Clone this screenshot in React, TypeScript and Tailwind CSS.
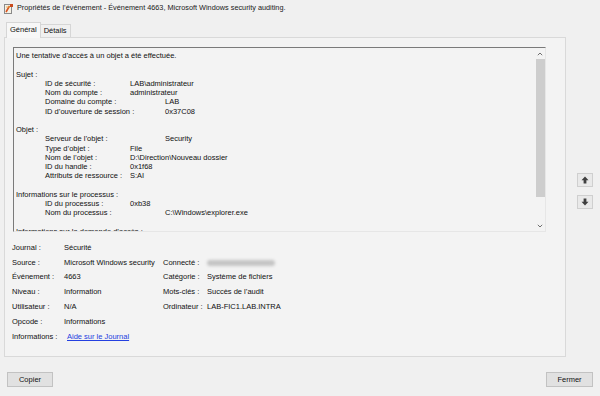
import React from "react";

const font = { fontFamily: '"Liberation Sans", Arial, sans-serif' };

type Line = { text?: string; label?: string; value?: string; far?: boolean };

const message: Line[] = [
  { text: "Une tentative d’accès à un objet a été effectuée." },
  {},
  { text: "Sujet :" },
  { label: "ID de sécurité :", value: "LAB\\administrateur" },
  { label: "Nom du compte :", value: "administrateur" },
  { label: "Domaine du compte :", value: "LAB", far: true },
  { label: "ID d’ouverture de session :", value: "0x37C08", far: true },
  {},
  { text: "Objet :" },
  { label: "Serveur de l’objet :", value: "Security", far: true },
  { label: "Type d’objet :", value: "File" },
  { label: "Nom de l’objet :", value: "D:\\Direction\\Nouveau dossier" },
  { label: "ID du handle :", value: "0x1f68" },
  { label: "Attributs de ressource :", value: "S:AI" },
  {},
  { text: "Informations sur le processus :" },
  { label: "ID du processus :", value: "0xb38" },
  { label: "Nom du processus :", value: "C:\\Windows\\explorer.exe", far: true },
  {},
  { text: "Informations sur la demande d’accès :" },
];

function EventIcon() {
  return (
    <svg width="9" height="10" viewBox="0 0 9 10">
      <rect x="0.5" y="0.5" width="7" height="9" fill="#f4f1e6" stroke="#8a8a8a" />
      <path d="M2 8 L5.5 2" stroke="#d9531e" strokeWidth="1.6" />
      <path d="M2 3 H6" stroke="#e6a23c" strokeWidth="0.8" />
      <rect x="6" y="0" width="3" height="3" fill="#c94a1c" />
    </svg>
  );
}

function BlockArrow({ down }: { down?: boolean }) {
  return (
    <svg width="8" height="8" viewBox="0 0 8 8" className={down ? "rotate-180" : ""}>
      <path d="M4 0.5 L7.5 4.2 H5.4 V7.5 H2.6 V4.2 H0.5 Z" fill="#3f3f3f" />
    </svg>
  );
}

function Chevron({ down }: { down?: boolean }) {
  return (
    <svg width="6" height="4" viewBox="0 0 6 4">
      <path d={down ? "M0.8 0.8 L3 3 L5.2 0.8" : "M0.8 3.2 L3 1 L5.2 3.2"} fill="none" stroke="#606060" strokeWidth="0.9" />
    </svg>
  );
}

const details: [string, React.ReactNode, string?, React.ReactNode?][] = [
  ["Journal :", "Sécurité"],
  ["Source :", "Microsoft Windows security", "Connecté :", <div className="mt-[1px] h-[6px] w-[68px] rounded-sm bg-[#c4c4c4] blur-[1.5px]" />],
  ["Événement :", "4663", "Catégorie :", "Système de fichiers"],
  ["Niveau :", "Information", "Mots-clés :", "Succès de l’audit"],
  ["Utilisateur :", "N/A", "Ordinateur :", "LAB-FIC1.LAB.INTRA"],
  ["Opcode :", "Informations"],
  ["Informations :", <span className="ml-[3px] text-[#2440e0] underline">Aide sur le Journal</span>],
];

export default function App() {
  return (
    <div className="flex h-[396px] w-[600px] flex-col bg-[#f0f0f0] text-[7.5px] text-[#111]" style={font}>
      <div className="flex h-[16px] items-center gap-[4px] pl-[4px] pt-[1px]">
        <EventIcon />
        <span className="text-[7.3px] text-[#202020]">
          Propriétés de l’événement - Événement 4663, Microsoft Windows security auditing.
        </span>
      </div>

      <div className="mt-[6px] flex">
        <div className="ml-[4px] flex w-[562px] flex-col">
          <div className="flex h-[15px] items-end pl-[2px]">
            <div className="relative z-10 -mb-px flex h-[16px] items-center border border-b-0 border-[#d6d6d6] bg-[#f7f7f7] px-[3px] pb-[2px]">
              Général
            </div>
            <div className="flex h-[13px] items-center border border-b-0 border-l-0 border-[#d6d6d6] px-[3px]">
              Détails
            </div>
          </div>
          <div className="flex h-[320px] flex-col border border-[#d9d9d9] bg-[#f3f3f3] pl-[8px] pt-[9px]">
            <div className="flex h-[185px] w-[533px] border-b border-l border-r border-t border-[#7a7a7a] border-b-[#e6e6e6] border-r-[#e6e6e6]">
              <div className="flex-1 overflow-hidden whitespace-nowrap pl-[2px] pt-[3px] leading-[9.25px]">
                {message.map((l, i) =>
                  l.label ? (
                    <div key={i} className="flex h-[9.25px] pl-[29px]">
                      <span className="w-[85px] shrink-0 whitespace-nowrap">{l.label}</span>
                      <span className={l.far ? "pl-[35px]" : ""}>{l.value}</span>
                    </div>
                  ) : (
                    <div key={i} className="h-[9.25px]">{l.text}</div>
                  )
                )}
              </div>
              <div className="flex w-[10px] flex-col items-center">
                <div className="flex h-[11px] items-center"><Chevron /></div>
                <div className="h-[138px] w-[9px] bg-[#cdcdcd]" />
                <div className="flex-1" />
                <div className="flex h-[11px] items-center"><Chevron down /></div>
              </div>
            </div>

            <div className="mt-[8px] flex flex-col">
              {details.map(([l1, v1, l2, v2], i) => (
                <div key={i} className="-ml-px flex h-[14.8px] items-center">
                  <span className="w-[52px] shrink-0">{l1}</span>
                  <span className="w-[99px] shrink-0">{v1}</span>
                  {l2 && <span className="w-[44px] shrink-0">{l2}</span>}
                  {v2}
                </div>
              ))}
            </div>
          </div>
        </div>

        <div className="ml-[11px] flex flex-col gap-[8px] pt-[151px]">
          <button className="flex h-[14px] w-[16px] items-center justify-center border border-[#cfcfcf] bg-[#e9e9e9]">
            <BlockArrow />
          </button>
          <button className="flex h-[14px] w-[16px] items-center justify-center border border-[#cfcfcf] bg-[#e9e9e9]">
            <BlockArrow down />
          </button>
        </div>
      </div>

      <div className="mt-[15px] flex justify-between px-[7px]">
        <button className="h-[15px] w-[46px] border border-[#c2c2c2] bg-[#e1e1e1] text-[7.5px]">Copier</button>
        <button className="h-[15px] w-[47px] border border-[#c2c2c2] bg-[#e1e1e1] text-[7.5px]">Fermer</button>
      </div>
    </div>
  );
}
